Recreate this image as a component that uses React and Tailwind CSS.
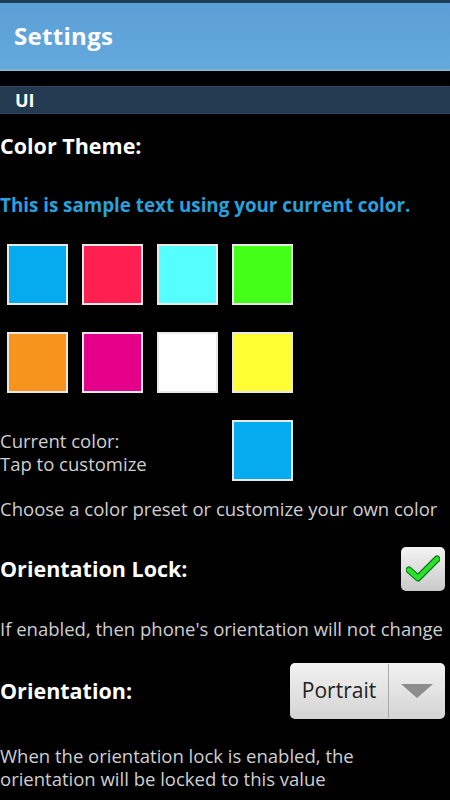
const SWATCHES = [
  ['#05aaef', '#ff1f50', '#55ffff', '#44ff18'],
  ['#f7941d', '#e5008a', '#ffffff', '#ffff33'],
];

function Swatch({ color }) {
  return (
    <div className="w-[61px] h-[61px] border-2 border-[#e8e8e8]" style={{ backgroundColor: color }} />
  );
}

export default function App() {
  return (
    <div className="w-[450px] h-[800px] bg-black overflow-hidden font-['Open_Sans',sans-serif] text-[#cfcfcf]">
      {/* Title bar */}
      <div className="h-[3px] bg-[#1d3c5a]" />
      <div className="h-[68px] bg-gradient-to-b from-[#5b9fd6] to-[#64a9dc] border-b-2 border-[#7eb3d9] flex items-center px-[14px]">
        <span className="text-white font-bold text-[24px] tracking-[0.3px]">Settings</span>
      </div>
      <div className="h-[15px]" />

      {/* Section header */}
      <div className="h-[28px] bg-[#233a51] border-y border-[#2c4662] flex items-center px-[15px]">
        <span className="text-white font-bold text-[18px]">UI</span>
      </div>

      {/* Color theme */}
      <div className="pt-[17px] text-white font-bold text-[21.5px] leading-[30px]">Color Theme:</div>
      <div className="pt-[30px] text-[#28a2dd] font-bold text-[18.8px] leading-[28px]">
        This is sample text using your current color.
      </div>

      <div className="pl-[7px] pt-[25px] flex flex-col gap-[27px]">
        {SWATCHES.map((row, i) => (
          <div key={i} className="flex gap-[14px]">
            {row.map((c) => (
              <Swatch key={c} color={c} />
            ))}
          </div>
        ))}
      </div>

      <div className="flex items-center pt-[27px]">
        <div className="w-[232px] text-[18.5px] leading-[23px] pt-[3px]">
          Current color:
          <br />
          Tap to customize
        </div>
        <Swatch color="#05aaef" />
      </div>

      <div className="pt-[16px] text-[18.5px] leading-[24px] whitespace-nowrap">
        Choose a color preset or customize your own color
      </div>

      {/* Orientation lock */}
      <div className="flex items-center justify-between pt-[26px] pr-[5px]">
        <span className="text-white font-bold text-[21.5px]">Orientation Lock:</span>
        <div className="w-[44px] h-[44px] rounded-[5px] bg-gradient-to-b from-[#f4f4f4] to-[#c9c9c9] flex items-center justify-center">
          <svg width="34" height="28" viewBox="0 0 34 28">
            <path d="M3 15 L12 23 L31 4" fill="none" stroke="#0a7d12" strokeWidth="7" strokeLinecap="round" strokeLinejoin="round" />
            <path d="M3 15 L12 23 L31 4" fill="none" stroke="#2ee02e" strokeWidth="4.5" strokeLinecap="round" strokeLinejoin="round" />
          </svg>
        </div>
      </div>

      <div className="pt-[26px] text-[18.5px] leading-[24px] whitespace-nowrap">
        If enabled, then phone's orientation will not change
      </div>

      {/* Orientation */}
      <div className="flex items-center justify-between pt-[22px] pr-[5px]">
        <span className="text-white font-bold text-[21.5px]">Orientation:</span>
        <div className="w-[155px] h-[56px] rounded-[5px] bg-gradient-to-b from-[#f2f2f2] to-[#d4d4d4] flex items-stretch">
          <div className="w-[98px] flex items-center justify-center text-[#222] text-[21px]">Portrait</div>
          <div className="w-px bg-[#a9a9a9] my-[1px]" />
          <div className="flex-1 flex items-center justify-center">
            <svg width="32" height="14" viewBox="0 0 32 14">
              <path d="M0 0 H32 L16 14 Z" fill="#8c8c8c" />
            </svg>
          </div>
        </div>
      </div>

      <div className="pt-[25px] text-[18.5px] leading-[23px]">
        When the orientation lock is enabled, the
        <br />
        orientation will be locked to this value
      </div>
    </div>
  );
}
